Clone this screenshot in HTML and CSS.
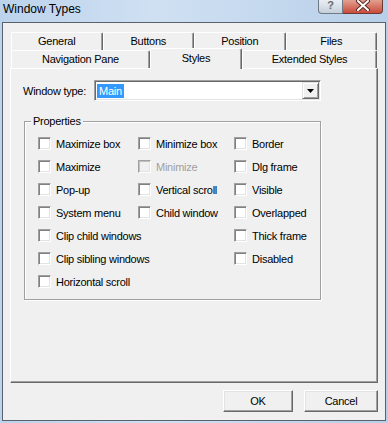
FILE: index.html
```html
<!DOCTYPE html>
<html lang="en">
  <head>
    <meta charset="UTF-8" />
    <meta name="viewport" content="width=device-width, initial-scale=1.0" />
    <title>Window Types</title>
    <link rel="stylesheet" href="styles.css">
  </head>
  <body>
    <div class="titlebar">
      <span class="title">Window Types</span>
      <div class="caption-btns">
        <span class="cap-help">?</span>
        <span class="cap-close">
          <svg width="16" height="11" viewBox="0 0 16 11">
            <path d="M3 1 L13 10 M13 1 L3 10" stroke="#5a2a26" stroke-width="4" stroke-linecap="round" />
            <path d="M3 1 L13 10 M13 1 L3 10" stroke="#fff" stroke-width="2" stroke-linecap="round" />
          </svg>
        </span>
      </div>
    </div>

    <div class="dialog">
      <div class="tabs">
        <div class="tab-row">
          <div class="tab">General</div>
          <div class="tab">Buttons</div>
          <div class="tab">Position</div>
          <div class="tab">Files</div>
        </div>
        <div class="tab-row">
          <div class="tab tab-nav">Navigation Pane</div>
          <div class="tab tab-active">Styles</div>
          <div class="tab tab-ext">Extended Styles</div>
        </div>
      </div>

      <div class="panel">
        <div class="field">
          <label class="field-label">Window type:</label>
          <div class="combo">
            <span class="combo-value">Main</span>
            <span class="combo-btn">
              <svg width="7" height="4" viewBox="0 0 7 4"><path d="M0 0 H7 L3.5 4 Z" fill="#000" /></svg>
            </span>
          </div>
        </div>

        <div class="group">
          <div class="group-title">Properties</div>
          <div class="checks">
            <div class="col col-1">
              <div class="check"><span class="box"></span>Maximize box</div>
              <div class="check"><span class="box"></span>Maximize</div>
              <div class="check"><span class="box"></span>Pop-up</div>
              <div class="check"><span class="box"></span>System menu</div>
              <div class="check"><span class="box"></span>Clip child windows</div>
              <div class="check"><span class="box"></span>Clip sibling windows</div>
              <div class="check"><span class="box"></span>Horizontal scroll</div>
            </div>
            <div class="col col-2">
              <div class="check"><span class="box"></span>Minimize box</div>
              <div class="check check-disabled"><span class="box"></span>Minimize</div>
              <div class="check"><span class="box"></span>Vertical scroll</div>
              <div class="check"><span class="box"></span>Child window</div>
            </div>
            <div class="col">
              <div class="check"><span class="box"></span>Border</div>
              <div class="check"><span class="box"></span>Dlg frame</div>
              <div class="check"><span class="box"></span>Visible</div>
              <div class="check"><span class="box"></span>Overlapped</div>
              <div class="check"><span class="box"></span>Thick frame</div>
              <div class="check"><span class="box"></span>Disabled</div>
            </div>
          </div>
        </div>
      </div>

      <div class="buttons">
        <button class="btn btn-ok">OK</button>
        <button class="btn btn-cancel">Cancel</button>
      </div>
    </div>
  </body>
</html>
```

FILE: styles.css
```css
body {
  margin: 0;
  width: 388px;
  height: 423px;
  overflow: hidden;
  font-family: "Liberation Sans", Arial, sans-serif;
  font-size: 11px;
  letter-spacing: -0.25px;
  color: #000;
  background: linear-gradient(90deg, #bcd3ec 0%, #cfe0f2 40%, #c4d8ee 70%, #b7cfe9 100%);
}
.titlebar {
  display: flex;
  height: 22px;
  padding: 0 5px 0 3px;
  box-sizing: border-box;
}
.title {
  font-size: 12px;
  line-height: 18px;
  letter-spacing: 0;
}
.caption-btns {
  margin-left: auto;
  display: flex;
  align-self: flex-start;
}
.cap-help {
  width: 25px;
  height: 14px;
  box-sizing: border-box;
  border: 1px solid #6f7a86;
  border-top: none;
  border-radius: 0 0 0 4px;
  background: linear-gradient(#e9eef4, #c5cfda);
  color: #6a6a6a;
  font-weight: bold;
  font-size: 11px;
  line-height: 11px;
  text-align: center;
}
.cap-close {
  width: 40px;
  height: 14px;
  box-sizing: border-box;
  border: 1px solid #6b3a35;
  border-left: none;
  border-top: none;
  border-radius: 0 0 4px 0;
  background: linear-gradient(#e2a08f, #c94b3c);
  display: flex;
  justify-content: center;
  align-items: flex-start;
}
.dialog {
  margin: 0 2px;
  height: 399px;
  box-sizing: border-box;
  border: 1px solid #59626c;
  background: #f0f0f0;
  padding: 9px 7px 0;
}
.tabs {
  margin: 0 1px;
}
.tab-row {
  display: flex;
  height: 18px;
}
.tab {
  flex: 1;
  box-sizing: border-box;
  height: 18px;
  border-top: 1px solid #fff;
  border-left: 1px solid #fff;
  border-right: 1px solid #696969;
  box-shadow: inset -1px 0 #a0a0a0;
  border-radius: 2px 2px 0 0;
  text-align: center;
  line-height: 17px;
  background: #f0f0f0;
}
.tab-nav {
  flex: 0 0 139px;
}
.tab-active {
  flex: 0 0 92px;
  height: 21px;
  margin-top: -2px;
  line-height: 18px;
  position: relative;
  z-index: 1;
}
.tab-ext {
  flex: 1;
}
.panel {
  height: 315px;
  box-sizing: border-box;
  border-top: 1px solid #fff;
  border-left: 1px solid #fff;
  border-right: 1px solid #696969;
  border-bottom: 1px solid #696969;
  box-shadow: inset -1px -1px #a0a0a0;
  padding: 11px 0 0 12px;
}
.field {
  display: flex;
  align-items: center;
}
.field-label {
  width: 71px;
}
.combo {
  width: 227px;
  height: 21px;
  box-sizing: border-box;
  padding: 1px;
  display: flex;
  align-items: center;
  background: #fff;
  border-top: 1px solid #a0a0a0;
  border-left: 1px solid #a0a0a0;
  border-right: 1px solid #fff;
  border-bottom: 1px solid #fff;
  box-shadow: inset 1px 1px #696969, inset -1px -1px #e3e3e3;
}
.combo-value {
  margin-left: 1px;
  padding: 0 2px;
  line-height: 14px;
  background: #3399ff;
  color: #fff;
}
.combo-btn {
  margin-left: auto;
  width: 17px;
  height: 17px;
  box-sizing: border-box;
  background: #f0f0f0;
  border-top: 1px solid #e3e3e3;
  border-left: 1px solid #e3e3e3;
  border-right: 1px solid #696969;
  border-bottom: 1px solid #696969;
  box-shadow: inset 1px 1px #fff, inset -1px -1px #a0a0a0;
  display: flex;
  justify-content: center;
  align-items: center;
}
.group {
  margin: 20px 0 0 1px;
  width: 297px;
  height: 179px;
  box-sizing: border-box;
  border: 1px solid #a0a0a0;
  box-shadow: 1px 1px 0 #fff, inset 1px 1px 0 #fff;
}
.group-title {
  display: table;
  margin: -7px 0 0 6px;
  padding: 0 2px;
  line-height: 13px;
  background: #f0f0f0;
}
.checks {
  display: flex;
  margin-top: 4px;
  padding-left: 13px;
}
.col {
  display: flex;
  flex-direction: column;
}
.col-1 {
  width: 100px;
}
.col-2 {
  width: 96px;
}
.check {
  height: 23px;
  display: flex;
  align-items: center;
  white-space: nowrap;
}
.box {
  flex-shrink: 0;
  width: 13px;
  height: 13px;
  box-sizing: border-box;
  margin-right: 5px;
  background: #fff;
  border-top: 1px solid #a0a0a0;
  border-left: 1px solid #a0a0a0;
  border-right: 1px solid #fff;
  border-bottom: 1px solid #fff;
  box-shadow: inset 1px 1px #808080, inset -1px -1px #e3e3e3;
}
.check-disabled {
  color: #a0a0a0;
}
.check-disabled .box {
  background: #f0f0f0;
  box-shadow: inset 1px 1px #c0c0c0, inset -1px -1px #e3e3e3;
}
.buttons {
  display: flex;
  justify-content: flex-end;
  gap: 11px;
  margin-top: 7px;
}
.btn {
  height: 22px;
  box-sizing: border-box;
  padding: 0;
  font-family: "Liberation Sans", Arial, sans-serif;
  font-size: 11px;
  letter-spacing: -0.25px;
  color: #000;
  background: #f0f0f0;
  border-top: 1px solid #fff;
  border-left: 1px solid #fff;
  border-right: 1px solid #696969;
  border-bottom: 1px solid #696969;
  box-shadow: inset -1px -1px #a0a0a0, inset 1px 1px #e3e3e3;
}
.btn-ok {
  width: 70px;
}
.btn-cancel {
  width: 74px;
}
```
